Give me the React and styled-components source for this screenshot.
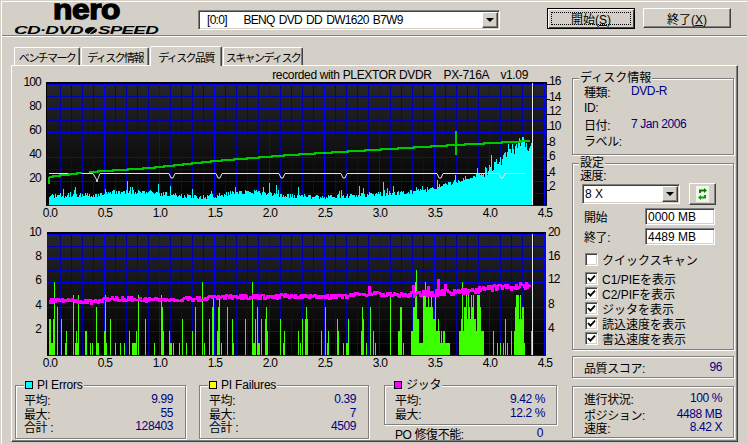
import React from "react";
import styled, { createGlobalStyle } from "styled-components";

const FACE = '#d4d0c8';
const NAVY = '#000080';
const FONT = '"Liberation Sans", "Noto Sans CJK JP", sans-serif';

const Global = createGlobalStyle`
  html, body { margin: 0; padding: 0; background: ${FACE}; }
  body { font-family: ${FONT}; font-size: 12px; color: #000; }
  * { box-sizing: border-box; }
`;

const Page = styled.div`
  width: 747px; height: 444px; padding-top: 1px; background: ${FACE}; overflow: hidden;
  letter-spacing: -0.4px;
`;
const Frame = styled.div`
  margin-left: 1px; height: 443px; border-top: 1px solid #fff; border-left: 1px solid #fff;
  display: flex; flex-direction: column;
`;
const Header = styled.header`
  height: 34px; display: flex; align-items: flex-start; padding-left: 12px;
  border-bottom: 1px solid #808080; box-shadow: 0 1px 0 #fff;
`;
const LogoSvg = styled.svg`
  display: block; width: 146px; height: 33px; flex: none; overflow: visible;
`;
const Combo = styled.div`
  flex: none; position: relative; display: flex; align-items: center;
  margin: ${p => p.$margin}; width: ${p => p.$w}px; height: ${p => p.$h}px;
  padding-left: ${p => p.$pad}px; background: #fff; white-space: pre;
  letter-spacing: ${p => p.$track || 0}px; word-spacing: ${p => p.$words || 0}px;
  border: 1px solid; border-color: #808080 #fff #fff #808080;
  box-shadow: inset 1px 1px 0 #404040, inset -1px -1px 0 ${FACE};
`;
const ComboArrow = styled.span`
  position: absolute; right: 1px; top: 1px; bottom: 1px; width: 16px; background: ${FACE};
  border: 1px solid; border-color: #fff #404040 #404040 #fff;
  box-shadow: inset -1px -1px 0 #808080;
  display: flex; align-items: center; justify-content: center;
  &::after { content: ""; border: 4px solid transparent; border-top: 4px solid #000; border-bottom: 0; }
`;
const ActionButton = styled.button`
  flex: none; width: 88px; height: ${p => p.$primary ? 21 : 20}px; margin: 6px 0 0 ${p => p.$left}px; padding: 0;
  background: ${FACE}; font: inherit; letter-spacing: 0; color: #000;
  border: 1px solid; border-color: ${p => p.$primary ? '#000' : '#fff #404040 #404040 #fff'};
  box-shadow: ${p => p.$primary
    ? 'inset 1px 1px 0 #fff, inset -1px -1px 0 #404040'
    : 'inset -1px -1px 0 #808080'};
  outline: ${p => p.$primary ? '1px dotted #000' : 'none'}; outline-offset: -5px;
`;
const TabRow = styled.nav`
  height: 28px; flex: none; display: flex; align-items: flex-end; padding-left: 12px; margin-top: 1px;
  position: relative; z-index: 1;
`;
const Tab = styled.div`
  width: ${p => p.$w}px; height: ${p => p.$active ? 20 : 18}px; margin-right: 1px;
  margin-bottom: ${p => p.$active ? -1 : 0}px;
  background: ${FACE}; display: flex; align-items: center; justify-content: center;
  white-space: nowrap; font-size: 11px; letter-spacing: -1.6px; padding-top: 1px;
  border-top: 1px solid #fff; border-left: 1px solid #fff; border-right: 1px solid #404040;
  border-radius: 2px 2px 0 0; box-shadow: inset -1px 0 0 #808080;
`;
const TabPanel = styled.main`
  margin-left: 9px; width: 727px; height: 377px; display: flex; flex: none; background: ${FACE};
  border: 1px solid; border-color: #fff #404040 #404040 #fff;
  box-shadow: inset -1px -1px 0 #808080;
`;
const LeftColumn = styled.section`
  width: 556px; flex: none; display: flex; flex-direction: column;
`;
const ChartSvg = styled.svg`
  display: block; flex: none; width: 556px; height: ${p => p.$h}px;
  text { font-family: ${FONT}; font-size: 12px; letter-spacing: -0.8px; fill: #000; }
  text.cap { letter-spacing: -0.35px; }
`;
const StatsRow = styled.div`
  display: flex; align-items: flex-start; margin-top: 13px; padding-left: 3px;
`;
const StatsColumn = styled.div`
  flex: none; margin-left: ${p => p.$left}px; width: ${p => p.$w}px;
`;
const Group = styled.div`
  position: relative; margin: ${p => p.$margin || 0}; padding: ${p => p.$pad};
  width: ${p => p.$w}px; height: ${p => p.$h}px; flex: none;
  border: 1px solid #808080; box-shadow: 1px 1px 0 #fff, inset 1px 1px 0 #fff;
`;
const GroupTitle = styled.div`
  position: absolute; top: -8px; left: ${p => p.$left}px; padding: 0 1px; height: 14px; line-height: 14px;
  background: ${FACE}; display: flex; align-items: center; gap: 4px; white-space: nowrap;
  letter-spacing: ${p => p.$flat ? '0' : '-0.2px'};
`;
const Swatch = styled.i`
  display: block; width: 8px; height: 8px; background: ${p => p.$color}; border: 1px solid #000;
`;
const DataRow = styled.div`
  display: flex; justify-content: space-between; align-items: center; height: ${p => p.$h || 14}px;
  margin-top: ${p => p.$top || 0}px; white-space: nowrap;
  padding: 0 ${p => p.$right || 0}px 0 ${p => p.$left || 0}px;
`;
const InfoRow = styled.div`
  display: flex; align-items: center; height: 16.5px; white-space: nowrap;
`;
const InfoLabel = styled.span`
  width: 47px; flex: none;
`;
const Value = styled.span`
  color: ${NAVY};
`;
const RightColumn = styled.aside`
  width: 164px; flex: none; margin-left: 4px; padding-top: 12px;
`;
const SpeedLabel = styled.div`
  height: 14px; line-height: 14px;
`;
const SpeedRow = styled.div`
  display: flex; align-items: flex-start; margin: 1px 0 0 2px; height: 20px;
`;
const RefreshButton = styled.button`
  width: 27px; height: 22px; margin: -1px 0 0 9px; padding: 0; background: ${FACE}; flex: none;
  display: flex; align-items: center; justify-content: center;
  border: 1px solid; border-color: #fff #404040 #404040 #fff; box-shadow: inset -1px -1px 0 #808080;
`;
const FieldRow = styled.label`
  display: flex; align-items: center; justify-content: space-between; height: 17px; margin-top: ${p => p.$top}px;
  padding: 0 18px 0 4px;
`;
const TextField = styled.div`
  width: 70px; height: 17px; background: #fff; padding-left: 2px; display: flex; align-items: center;
  border: 1px solid; border-color: #808080 #fff #fff #808080;
  box-shadow: inset 1px 1px 0 #404040, inset -1px -1px 0 ${FACE};
  letter-spacing: 0;
`;
const CheckRow = styled.div`
  display: flex; align-items: center; gap: 4px; height: ${p => p.$h}px; padding-left: 5px; white-space: nowrap;
  letter-spacing: 0; margin-top: ${p => p.$top || 0}px;
`;
const CheckBox = styled.span`
  width: 13px; height: 13px; flex: none; background: #fff; display: flex; align-items: center; justify-content: center;
  border: 1px solid; border-color: #808080 #fff #fff #808080;
  box-shadow: inset 1px 1px 0 #404040, inset -1px -1px 0 ${FACE};
`;
const CheckList = styled.div`
  margin-top: 5px;
`;

/* ---------- chart data ---------- */
const rng = (seed) => () => {
  seed = (seed * 1664525 + 1013904223) % 4294967296;
  return seed / 4294967296;
};
const interp = (pts, x) => {
  for (let i = 1; i < pts.length; i++) {
    if (x <= pts[i][0]) {
      const [a, b] = pts[i - 1];
      const [c, d] = pts[i];
      return b + ((d - b) * (x - a)) / (c - a);
    }
  }
  return pts[pts.length - 1][1];
};
const X0 = 49;
const xTick = (i) => X0 + i * 11;
const XLABELS = ['0.0', '0.5', '1.0', '1.5', '2.0', '2.5', '3.0', '3.5', '4.0', '4.5'];

const cyanPath = (() => {
  const r = rng(71);
  const profile = [[49, 9], [100, 10], [110, 13], [150, 13], [175, 10], [200, 8], [215, 9], [240, 13], [260, 13], [285, 9], [330, 8], [380, 11], [420, 14], [450, 22], [470, 27], [490, 37], [500, 42], [510, 52], [520, 62], [531, 60]];
  let d = '';
  for (let x = 49; x <= 531; x++) {
    const base = interp(profile, x);
    const spread = x > 480 ? 14 : 5;
    let h = base + (r() - 0.5) * spread;
    if (r() > 0.93) h += 4 + r() * 6;
    d += `M${x}.5 205V${Math.round(205 - Math.max(2, h))}`;
  }
  return d;
})();

const speedLine = (() => {
  const pts = [[49, 177], [55, 176], [90, 172], [150, 168], [215, 161], [290, 155], [455, 145], [530, 141]];
  const build = (from, to) => {
    let d = `M${from} ${Math.round(interp(pts, from))}`;
    for (let x = from + 1; x <= to; x++) {
      d += `H${x}V${Math.round(interp(pts, x))}`;
    }
    return d;
  };
  return `M49 184V177${build(49, 82)}${build(89, 530)}M456 131V155`;
})();

const guideLine = (() => {
  const dips = [172, 219, 282, 344, 440, 502];
  let d = 'M49 173.5H93L96 178.5L97 182L98 178.5L100 173.5';
  dips.forEach((x) => {
    d += `H${x - 3}L${x - 1} 178H${x + 1}L${x + 3} 173.5`;
  });
  return d + 'H525';
})();

const PI_BARS = [
  [49, 3], [50, 3], [51, 1], [52, 1], [53, 3], [54, 6], [57, 4], [61, 3], [65, 1], [66, 2], [73, 5], [75, 1], [76, 2], [77, 1], [78, 5],
  [85, 2], [86, 2], [90, 1], [92, 1], [96, 4], [97, 1], [98, 1], [104, 2], [105, 5], [106, 1], [110, 3], [115, 1], [120, 1], [124, 1],
  [129, 2], [132, 1], [133, 1], [134, 1], [135, 1], [136, 2], [138, 5], [145, 3], [154, 1], [161, 5], [162, 4], [163, 2], [169, 2], [170, 1],
  [171, 1], [173, 1], [179, 1], [182, 3], [186, 1], [192, 2], [195, 4], [202, 6], [204, 1], [209, 3], [212, 4], [213, 5], [217, 2], [218, 4],
  [219, 5], [221, 1], [227, 4], [232, 3], [233, 1], [245, 3], [252, 6], [253, 1], [254, 1], [255, 3], [257, 4], [258, 1], [259, 1], [261, 3],
  [265, 3], [266, 4], [267, 2], [280, 3], [283, 1], [284, 2], [298, 2], [300, 1], [302, 3], [305, 3], [306, 4], [307, 3], [321, 2], [325, 4],
  [327, 1], [328, 2], [337, 3], [338, 2], [343, 1], [346, 1], [347, 1], [348, 3], [361, 2], [362, 4], [363, 3], [366, 1], [370, 4], [373, 2],
  [375, 1], [390, 5], [398, 2], [399, 2], [400, 4], [401, 4], [403, 1], [493, 2], [497, 1], [500, 1], [503, 1], [505, 3], [507, 1], [511, 2], [531, 2],
];
const PI_CLUSTERS = [
  [411, [2, 2, 4, 4, 6, 7, 3, 3, 1, 1, 1, 1]],
  [423, [5, 5, 6, 4, 4, 5, 4, 4, 5, 4, 3, 3, 5, 2, 2, 3, 2, 1, 2, 1, 2, 2, 1, 1, 1, 1, 1]],
  [459, [2, 2, 3, 6, 2, 4, 4, 5, 3, 5, 4, 3, 5, 4, 5, 3, 3, 2, 5, 5, 5, 4, 2, 2, 2]],
  [514, [2, 4, 5, 5, 5, 3, 5, 3, 4, 4, 1]],
];
const piPath = (() => {
  const all = [...PI_BARS];
  PI_CLUSTERS.forEach(([x, vals]) => vals.forEach((v, i) => all.push([x + i, v])));
  return all.map(([x, v]) => `M${x}.5 355V${Math.round(355 - v * 12.1)}`).join('');
})();

const jitterPath = (() => {
  const r = rng(19);
  const pts = [[49, 302], [60, 300], [90, 302], [110, 299], [160, 300], [200, 299], [220, 297], [270, 297], [285, 296], [330, 297], [370, 294], [400, 295], [440, 293], [470, 292], [490, 288], [520, 287], [530, 287]];
  const spikes = { 369: 287, 428: 287, 438: 280, 413: 286, 445: 285, 520: 283, 526: 283 };
  let d = 'M49 303';
  for (let x = 50; x <= 530; x += 1) {
    const amp = x > 400 ? 6 : 4.4;
    const y = spikes[x] || Math.round(interp(pts, x) + (r() - 0.5) * amp);
    d += `H${x}V${y}`;
  }
  return d;
})();

const Grid = ({ top, bottom }) => {
  const step = (bottom - top) / 10;
  const lines = [];
  for (let i = 0; i <= 10; i++) {
    const y = Math.round(top + i * step) + 0.5;
    lines.push(<line key={`h${i}`} x1="47" x2="547" y1={y} y2={y} stroke={i % 2 === 0 ? '#0000ff' : '#0000b8'} />);
  }
  for (let i = 1; i <= 45; i++) {
    const x = xTick(i) + 0.5;
    lines.push(<line key={`v${i}`} x1={x} x2={x} y1={top - 1} y2={bottom} stroke={i % 5 === 0 ? '#0000ff' : '#0000a8'} />);
  }
  return <g shapeRendering="crispEdges">{lines}</g>;
};

const AxisX = ({ y }) => XLABELS.map((t, i) => (
  <text key={t} x={X0 + i * 55 + 1} y={y} textAnchor="middle">{t}</text>
));

const AxisY = ({ items, x, anchor }) => items.map(([t, y]) => (
  <text key={t} x={x} y={y + 4.5} textAnchor={anchor}>{t}</text>
));

const Defs = ({ id, from, to }) => (
  <defs>
    <linearGradient id={id} gradientUnits="userSpaceOnUse" x1="0" x2="0" y1={from} y2={to}>
      <stop offset="0" stopColor="#262626" />
      <stop offset="1" stopColor="#000" />
    </linearGradient>
  </defs>
);

const TopChart = () => (
  <ChartSvg $h={156} viewBox="12 66 556 156">
    <Defs id="bg1" from={84} to={205} />
    <text className="cap" x="528" y="79" textAnchor="end" xmlSpace="preserve">recorded with PLEXTOR DVDR    PX-716A    v1.09</text>
    <rect x="46" y="82" width="501" height="124" fill="#000" />
    <rect x="47" y="84" width="500" height="121" fill="url(#bg1)" />
    <Grid top={84} bottom={205} />
    <path d={cyanPath} stroke="#00ffff" fill="none" shapeRendering="crispEdges" />
    <path d={guideLine} stroke="#e4e4e4" fill="none" />
    <path d={speedLine} stroke="#00c800" strokeWidth="2" fill="none" shapeRendering="crispEdges" />
    <rect x="532" y="83" width="1" height="122" fill="#e8e8f0" />
    <AxisY anchor="end" x={41} items={[['100', 81], ['80', 105], ['60', 129], ['40', 153], ['20', 177]]} />
    <AxisY anchor="start" x={549} items={[['16', 80], ['14', 96], ['12', 110], ['10', 125], ['8', 141], ['6', 155], ['4', 171], ['2', 185]]} />
    <g shapeRendering="crispEdges">
      {[84, 99, 114, 129, 144, 160, 175, 190].map((y) => <rect key={y} x="546" y={y} width="4" height="1" fill="#000" />)}
    </g>
    <AxisX y={217} />
  </ChartSvg>
);

const BottomChart = () => (
  <ChartSvg $h={150} viewBox="12 222 556 150">
    <Defs id="bg2" from={234} to={355} />
    <rect x="47" y="232" width="499" height="124" fill="#000" />
    <rect x="47" y="234" width="499" height="121" fill="url(#bg2)" />
    <Grid top={234} bottom={355} />
    <path d={piPath} stroke="#3cff00" fill="none" shapeRendering="crispEdges" />
    <path d={jitterPath} stroke="#ff00ff" strokeWidth="2" fill="none" shapeRendering="crispEdges" />
    <rect x="532" y="234" width="1" height="121" fill="#e8e8f0" />
    <rect x="546" y="232" width="2" height="124" fill={FACE} />
    <AxisY anchor="end" x={41} items={[['10', 231], ['8', 255], ['6', 279], ['4', 304], ['2', 328]]} />
    <AxisY anchor="start" x={548} items={[['20', 231], ['16', 255], ['12', 278], ['8', 303], ['4', 327]]} />
    <AxisX y={367} />
  </ChartSvg>
);

const Logo = () => (
  <LogoSvg viewBox="0 0 146 33">
    <text x="39" y="17" fontFamily='"Liberation Sans", sans-serif' fontWeight="700" fontSize="27" textLength="67" lengthAdjust="spacingAndGlyphs" stroke="#000" strokeWidth="1.3">nero</text>
    <text x="0" y="32" fontFamily='"Liberation Sans", sans-serif' fontWeight="700" fontStyle="italic" fontSize="10" textLength="69" lengthAdjust="spacingAndGlyphs">CD·DVD</text>
    <ellipse cx="77" cy="28.5" rx="6" ry="3.6" fill="#000" transform="skewX(-12) translate(6 0)" />
    <path d="M74 33L84 24" stroke="#d4d0c8" strokeWidth="1" />
    <text x="84" y="32" fontFamily='"Liberation Sans", sans-serif' fontWeight="700" fontStyle="italic" fontSize="10" textLength="60" lengthAdjust="spacingAndGlyphs">SPEED</text>
  </LogoSvg>
);

const RefreshIcon = () => (
  <svg width="13" height="16" viewBox="0 0 13 16">
    <rect width="13" height="16" fill="#f4f4ee" />
    <path d="M3 7V3.5H8V2L11 4.5L8 7V5.5H5V7Z" fill="#008000" />
    <path d="M10 9V12.5H5V14L2 11.5L5 9V10.5H8V9Z" fill="#00a000" />
  </svg>
);

const CheckMark = () => (
  <svg width="9" height="9" viewBox="0 0 9 9">
    <path d="M1 4L3.4 6.6L8 1.6" stroke="#000" strokeWidth="1.8" fill="none" />
  </svg>
);

const StatRows = ({ rows }) => rows.map(([label, value, top]) => (
  <DataRow key={label} $top={top}>
    <span>{label}</span>
    <Value>{value}</Value>
  </DataRow>
));

export default function App() {
  return (
    <Page>
      <Global />
      <Frame>
        <Header>
          <Logo />
          <Combo $margin="8px 0 0 38px" $w={302} $h={20} $pad={8} $track={-0.7} $words={1.5}>
            {'[0:0]    BENQ DVD DD DW1620 B7W9'}
            <ComboArrow />
          </Combo>
          <ActionButton $primary $left={47}>開始(<u>S</u>)</ActionButton>
          <ActionButton $left={8}>終了(<u>X</u>)</ActionButton>
        </Header>
        <TabRow>
          <Tab $w={66}>ベンチマーク</Tab>
          <Tab $w={68}>ディスク情報</Tab>
          <Tab $w={72} $active>ディスク品質</Tab>
          <Tab $w={80}>スキャンディスク</Tab>
        </TabRow>
        <TabPanel>
          <LeftColumn>
            <TopChart />
            <BottomChart />
            <StatsRow>
              <StatsColumn $left={0} $w={171}>
                <Group $w={171} $h={54} $pad="6px 12px 0 8px">
                  <GroupTitle $left={8}><Swatch $color="#00ffff" />PI Errors</GroupTitle>
                  <StatRows rows={[['平均:', '9.99'], ['最大:', '55'], ['合計 :', '128403', -1]]} />
                </Group>
              </StatsColumn>
              <StatsColumn $left={13} $w={170}>
                <Group $w={170} $h={54} $pad="6px 12px 0 9px">
                  <GroupTitle $left={8}><Swatch $color="#ffff00" />PI Failures</GroupTitle>
                  <StatRows rows={[['平均:', '0.39'], ['最大:', '7'], ['合計 :', '4509', -1]]} />
                </Group>
              </StatsColumn>
              <StatsColumn $left={15} $w={173}>
                <Group $w={173} $h={40} $pad="6px 11px 0 10px">
                  <GroupTitle $left={8}><Swatch $color="#ff00ff" />ジッタ</GroupTitle>
                  <StatRows rows={[['平均:', '9.42 %'], ['最大:', '12.2 %']]} />
                </Group>
                <DataRow $top={1} $right={14} $left={11}>
                  <span>PO 修復不能:</span>
                  <Value>0</Value>
                </DataRow>
              </StatsColumn>
            </StatsRow>
          </LeftColumn>
          <RightColumn>
            <Group $w={162} $h={77} $pad="4px 0 0 11px">
              <GroupTitle $left={6} $flat>ディスク情報</GroupTitle>
              <InfoRow><InfoLabel>種類:</InfoLabel><Value>DVD-R</Value></InfoRow>
              <InfoRow><InfoLabel>ID:</InfoLabel></InfoRow>
              <InfoRow><InfoLabel>日付:</InfoLabel><Value>7 Jan 2006</Value></InfoRow>
              <InfoRow><InfoLabel>ラベル:</InfoLabel></InfoRow>
            </Group>
            <Group $w={162} $h={187} $margin="8px 0 0" $pad="5px 0 0 7px">
              <GroupTitle $left={6} $flat>設定</GroupTitle>
              <SpeedLabel>速度:</SpeedLabel>
              <SpeedRow>
                <Combo $margin="0" $w={98} $h={20} $pad={2}>
                  8 X
                  <ComboArrow />
                </Combo>
                <RefreshButton><RefreshIcon /></RefreshButton>
              </SpeedRow>
              <FieldRow $top={4}>開始<TextField>0000 MB</TextField></FieldRow>
              <FieldRow $top={3}>終了:<TextField>4489 MB</TextField></FieldRow>
              <CheckRow $h={13} $top={8}><CheckBox />クイックスキャン</CheckRow>
              <CheckList>
                {['C1/PIEを表示', 'C2/PIFを表示', 'ジッタを表示', '読込速度を表示', '書込速度を表示'].map((t) => (
                  <CheckRow key={t} $h={15}><CheckBox><CheckMark /></CheckBox>{t}</CheckRow>
                ))}
              </CheckList>
            </Group>
            <Group $w={162} $h={22} $margin="6px 0 0" $pad="2px 11px 0 11px">
              <DataRow $h={16}><span>品質スコア:</span><Value>96</Value></DataRow>
            </Group>
            <Group $w={162} $h={52} $margin="8px 0 0" $pad="4px 11px 0 11px">
              <StatRows rows={[['進行状況:', '100 %'], ['ポジション:', '4488 MB', 2], ['速度:', '8.42 X', -1]]} />
            </Group>
          </RightColumn>
        </TabPanel>
      </Frame>
    </Page>
  );
}
